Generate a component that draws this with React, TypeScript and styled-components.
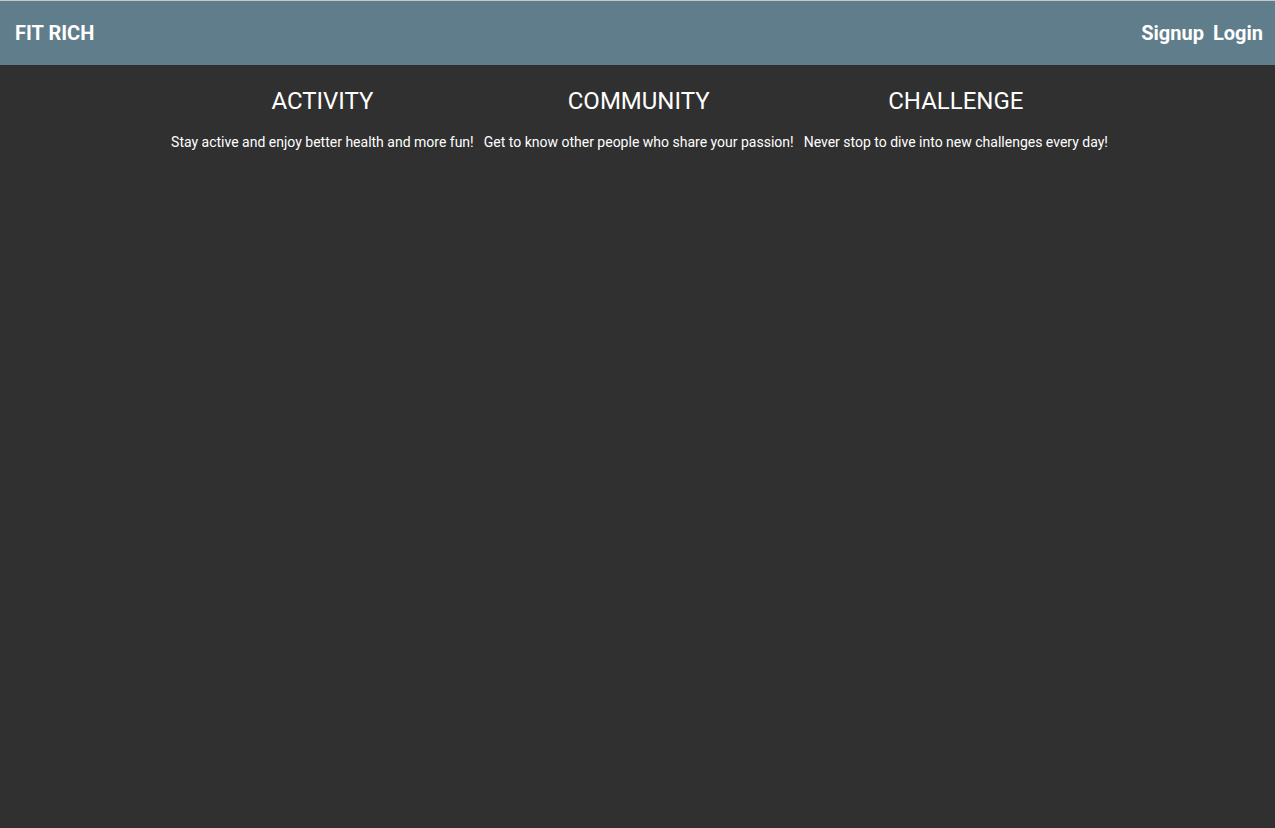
import React from "react";
import styled, { createGlobalStyle } from "styled-components";

const GlobalStyle = createGlobalStyle`
  html, body {
    margin: 0;
    padding: 0;
    background: #303030;
    font-family: Roboto, "Liberation Sans", sans-serif;
    color: #ffffff;
  }
`;

const Page = styled.div`
  min-height: 827px;
  background: #303030;
  border-top: 1px solid #c8c8c8;
`;

const Header = styled.header`
  height: 64px;
  background: #607d8b;
  display: flex;
  align-items: center;
  justify-content: space-between;
  padding: 0 12px 0 15px;
`;

const Brand = styled.div`
  font-size: 20px;
  font-weight: 700;
  color: #ffffff;
`;

const Nav = styled.nav`
  display: flex;
  gap: 9px;
`;

const NavLink = styled.a`
  font-size: 20px;
  font-weight: 700;
  color: #ffffff;
  text-decoration: none;
  cursor: pointer;
`;

const Features = styled.section`
  display: flex;
  justify-content: center;
  gap: 10px;
  padding: 22px 0 0 4px;
`;

const Feature = styled.div`
  display: flex;
  flex-direction: column;
  align-items: center;
`;

const FeatureTitle = styled.h2`
  margin: 0;
  font-size: 24px;
  font-weight: 400;
  line-height: 28px;
`;

const FeatureText = styled.p`
  margin: 18px 0 0;
  font-size: 14px;
  line-height: 18px;
`;

const features = [
  { title: "ACTIVITY", text: "Stay active and enjoy better health and more fun!" },
  { title: "COMMUNITY", text: "Get to know other people who share your passion!" },
  { title: "CHALLENGE", text: "Never stop to dive into new challenges every day!" },
];

export default function App() {
  return (
    <>
      <GlobalStyle />
      <Page>
        <Header>
          <Brand>FIT RICH</Brand>
          <Nav>
            <NavLink>Signup</NavLink>
            <NavLink>Login</NavLink>
          </Nav>
        </Header>
        <Features>
          {features.map((f) => (
            <Feature key={f.title}>
              <FeatureTitle>{f.title}</FeatureTitle>
              <FeatureText>{f.text}</FeatureText>
            </Feature>
          ))}
        </Features>
      </Page>
    </>
  );
}
